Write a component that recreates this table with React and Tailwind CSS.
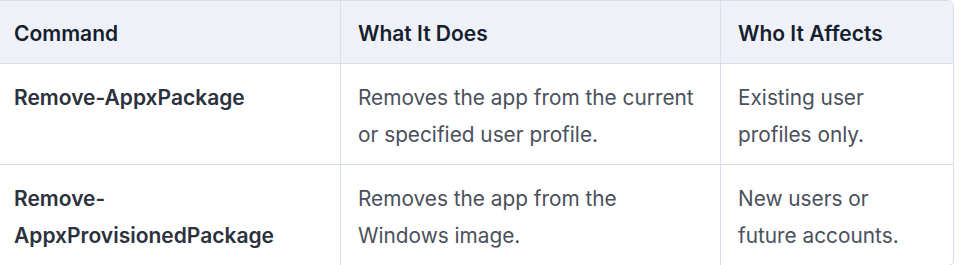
export default function App() {
  const rows = [
    [<>Remove-AppxPackage</>, <>Removes the app from the current<br />or specified user profile.</>, <>Existing user<br />profiles only.</>],
    [<>Remove-<br />AppxProvisionedPackage</>, <>Removes the app from the<br />Windows image.</>, <>New users or<br />future accounts.</>],
  ];
  return (
    <div className="w-[975px] h-[265px] bg-white overflow-hidden" style={{ fontFamily: "Inter, 'Noto Sans', sans-serif" }}>
      <div className="w-[954px] border-t border-r border-b border-[#d7e0ea] rounded-tr-[6px] rounded-br-[6px] overflow-hidden">
        <div className="grid grid-cols-[340px_380px_233px] bg-[#eef2f8] border-b border-[#d7e0ea] text-[21px] leading-[36px] font-semibold text-[#171e2e]">
          <div className="pl-[14px] pr-4 pt-[15px] pb-[11px] whitespace-nowrap">Command</div>
          <div className="px-[17px] pt-[15px] pb-[11px] border-l border-[#d7e0ea] whitespace-nowrap">What It Does</div>
          <div className="px-[17px] pt-[15px] pb-[11px] border-l border-[#d7e0ea] whitespace-nowrap">Who It Affects</div>
        </div>
        {rows.map((r, i) => (
          <div key={i} className={`grid grid-cols-[340px_380px_233px] text-[20.8px] leading-[37px] ${i === 0 ? "border-b border-[#d7e0ea]" : ""}`}>
            <div className="pl-[14px] pr-2 pt-[15px] pb-[11px] text-[21px] font-semibold text-[#2b313d] whitespace-nowrap">{r[0]}</div>
            <div className="px-[17px] pt-[15px] pb-[11px] border-l border-[#d7e0ea] text-[#4a505c] whitespace-nowrap">{r[1]}</div>
            <div className="px-[17px] pt-[15px] pb-[11px] border-l border-[#d7e0ea] text-[#4a505c] whitespace-nowrap">{r[2]}</div>
          </div>
        ))}
      </div>
    </div>
  );
}
